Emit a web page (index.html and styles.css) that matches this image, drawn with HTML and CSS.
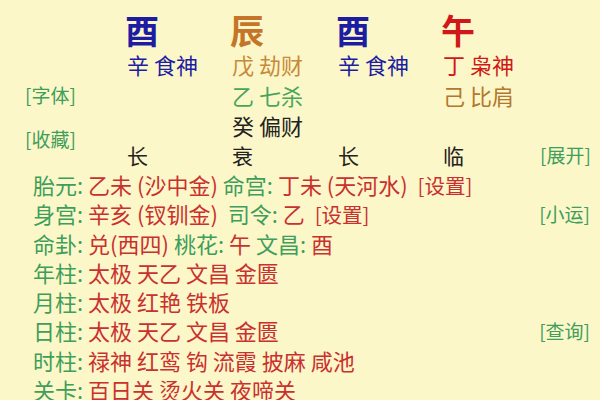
FILE: index.html
```html
<!DOCTYPE html>
<html lang="zh">
<head>
<meta charset="utf-8">
<link rel="stylesheet" href="styles.css">
</head>
<body>
<div class="page">
  <div class="pillars">
    <div class="big blue c1">酉</div>
    <div class="big orange c2">辰</div>
    <div class="big blue c3">酉</div>
    <div class="big red c4">午</div>

    <div class="hid blue c1 r2">辛 食神</div>
    <div class="hid tan c2 r2">戊 劫财</div>
    <div class="hid blue c3 r2">辛 食神</div>
    <div class="hid red c4 r2">丁 枭神</div>

    <div class="link side r3">[字体]</div>
    <div class="hid green c2 r3">乙 七杀</div>
    <div class="hid brown c4 r3">己 比肩</div>

    <div class="hid black c2 r4">癸 偏财</div>
    <div class="link side r45 fav">[收藏]</div>

    <div class="stage c1 r5">长</div>
    <div class="stage c2 r5">衰</div>
    <div class="stage c3 r5">长</div>
    <div class="stage c4 r5">临</div>
    <div class="link right r5">[展开]</div>
  </div>

  <div class="lines">
    <div class="line"><span><span class="k">胎元:</span> <span class="v">乙未 (沙中金)</span> <span class="k">命宫:</span> <span class="v">丁未 (天河水)&nbsp; <span class="set">[设置]</span></span></span></div>
    <div class="line"><span><span class="k">身宫:</span> <span class="v">辛亥 (钗钏金)</span>&nbsp; <span class="k">司令:</span> <span class="v">乙&nbsp; <span class="set">[设置]</span></span></span><span class="link">[小运]</span></div>
    <div class="line"><span><span class="k">命卦:</span> <span class="v">兑(西四)</span> <span class="k">桃花:</span> <span class="v">午</span> <span class="k">文昌:</span> <span class="v">酉</span></span></div>
    <div class="line"><span><span class="k">年柱:</span> <span class="v">太极 天乙 文昌 金匮</span></span></div>
    <div class="line"><span><span class="k">月柱:</span> <span class="v">太极 红艳 铁板</span></span></div>
    <div class="line"><span><span class="k">日柱:</span> <span class="v">太极 天乙 文昌 金匮</span></span><span class="link">[查询]</span></div>
    <div class="line"><span><span class="k">时柱:</span> <span class="v">禄神 红鸾 钩 流霞 披麻 咸池</span></span></div>
    <div class="line"><span><span class="k">关卡:</span> <span class="v">百日关 烫火关 夜啼关</span></span></div>
  </div>
</div>
</body>
</html>
```
FILE: styles.css
```css
html, body {
  margin: 0;
  padding: 0;
  background: #fcf7c8;
}
body {
  font-family: "Noto Sans CJK SC", "Noto Sans", sans-serif;
  width: 600px;
  height: 400px;
  overflow: hidden;
}
.page {
  display: flex;
  flex-direction: column;
}
.pillars {
  display: grid;
  grid-template-columns: 127px 105px 106px 105px 97px 1fr;
  grid-template-rows: 12px 36px 32px 30px 29px 31px;
  align-items: center;
}
.big {
  grid-row: 2;
  font-size: 34px;
  font-weight: 700;
  line-height: 36px;
  margin-left: -2px;
}
.c1 { grid-column: 2; }
.c2 { grid-column: 3; }
.c3 { grid-column: 4; }
.c4 { grid-column: 5; }
.r2 { grid-row: 3; }
.r3 { grid-row: 4; }
.r4 { grid-row: 5; }
.r5 { grid-row: 6; }
.r45 { grid-row: 5 / 7; }
.hid {
  font-size: 22px;
  line-height: 28px;
  white-space: nowrap;
}
.stage {
  font-size: 21px;
  line-height: 28px;
  color: #222;
}
.link {
  color: #3e9e5c;
  font-size: 19px;
  line-height: 26px;
  white-space: nowrap;
}
.side {
  grid-column: 1;
  padding-left: 25px;
}
.fav {
  align-self: start;
  margin-top: 16px;
}
.right {
  grid-column: 6;
}
.blue { color: #1d1da3; }
.orange { color: #c47528; }
.red { color: #d01818; }
.tan { color: #c8893a; }
.green { color: #4aa55c; }
.brown { color: #b3772f; }
.black { color: #222; }

.lines {
  padding: 0 10px 0 33px;
  display: flex;
  flex-direction: column;
}
.line {
  display: flex;
  justify-content: space-between;
  align-items: center;
  font-size: 22px;
  line-height: 29.3px;
  height: 29.3px;
  white-space: nowrap;
}
.set {
  font-size: 20.5px;
}
.k { color: #3e9e5c; }
.v { color: #c93030; }
```
